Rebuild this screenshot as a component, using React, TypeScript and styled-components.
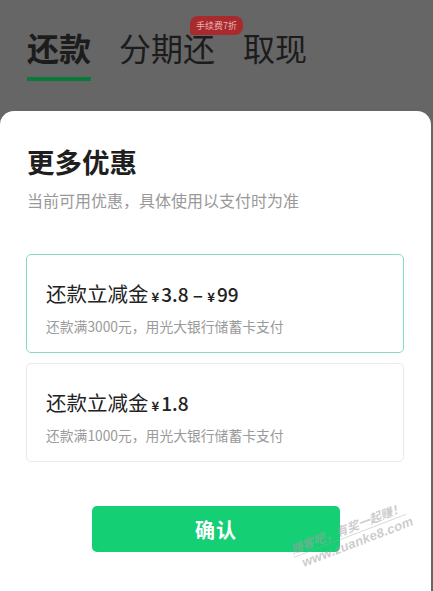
import React, { FC } from 'react';
import styled, { createGlobalStyle } from 'styled-components';

const GlobalStyle = createGlobalStyle`
  html, body {
    margin: 0;
    padding: 0;
    background: #666666;
  }
  body {
    font-family: "Noto Sans CJK SC", "Noto Sans", sans-serif;
  }
`;

const Screen = styled.div`
  position: relative;
  width: 433px;
  height: 591px;
  display: flex;
  flex-direction: column;
  background: #666666;
  overflow: hidden;
`;

const TabBar = styled.div`
  flex: 0 0 auto;
  display: flex;
  flex-direction: row;
  align-items: flex-start;
  gap: 28px;
  padding: 27px 0 0 27px;
  height: 84px;
  box-sizing: border-box;
`;

const Tab = styled.div<{ $active?: boolean }>`
  position: relative;
  display: flex;
  flex-direction: column;
  align-items: stretch;
  font-size: 32px;
  line-height: 40px;
  font-weight: ${(p) => (p.$active ? 700 : 400)};
  color: #1c1c1c;
`;

const TabLine = styled.div`
  height: 4px;
  margin-top: 10px;
  background: #0a7a3c;
`;

const Badge = styled.div`
  position: absolute;
  top: -11px;
  right: -28px;
  padding: 0 6px;
  height: 19px;
  border-radius: 8px 8px 8px 2px;
  background: #a82a2d;
  color: #e9b4b4;
  font-size: 9px;
  line-height: 19px;
  font-weight: 400;
  white-space: nowrap;
`;

const Sheet = styled.div`
  flex: 1 1 auto;
  margin-top: 27px;
  margin-right: 2px;
  background: #ffffff;
  border-radius: 14px 14px 0 0;
  display: flex;
  flex-direction: column;
  padding: 32px 27px 0 26px;
  box-sizing: border-box;
`;

const Title = styled.div`
  font-size: 27.5px;
  line-height: 36px;
  font-weight: 700;
  color: #1f1f1f;
  padding-left: 1px;
`;

const Subtitle = styled.div`
  margin-top: 10px;
  font-size: 16px;
  line-height: 22px;
  color: #999999;
  padding-left: 1px;
`;

const CardList = styled.div`
  margin-top: 43px;
  display: flex;
  flex-direction: column;
  gap: 10px;
`;

const Card = styled.div<{ $selected?: boolean }>`
  height: 99px;
  box-sizing: border-box;
  border: 1px solid ${(p) => (p.$selected ? '#86dcb6' : '#e9e9e9')};
  border-radius: 5px;
  padding: 24px 0 0 19px;
  display: flex;
  flex-direction: column;
`;

const CardTitle = styled.div`
  font-size: 20.5px;
  line-height: 28px;
  color: #222222;
`;

const Amount = styled.span`
  font-size: 19px;
  font-weight: 500;
  margin-left: 3px;
`;

const Yen = styled.span`
  font-size: 13px;
  font-weight: 700;
  margin-right: 2px;
`;

const CardSub = styled.div`
  margin-top: 6px;
  font-size: 13.8px;
  line-height: 18px;
  color: #9a9a9a;
`;

const ButtonRow = styled.div`
  margin-top: 44px;
  display: flex;
  flex-direction: row;
  justify-content: flex-start;
  padding-left: 66px;
`;

const ConfirmButton = styled.button`
  width: 248px;
  height: 46px;
  border: none;
  border-radius: 5px;
  background: #15cf74;
  color: #ffffff;
  font-family: "Noto Sans CJK SC", sans-serif;
  font-size: 20px;
  font-weight: 700;
  letter-spacing: 1px;
`;

const Watermark = styled.div`
  position: absolute;
  left: 288px;
  top: 542px;
  transform: rotate(-21deg);
  transform-origin: left top;
  display: flex;
  flex-direction: column;
  align-items: flex-start;
  color: rgba(160, 160, 160, 0.55);
  font-weight: 700;
  font-style: italic;
  pointer-events: none;
`;

const WatermarkLine = styled.div`
  font-size: 12px;
  line-height: 15px;
  border-bottom: 1px solid rgba(160, 160, 160, 0.45);
  padding-bottom: 1px;
`;

const WatermarkUrl = styled.div`
  font-family: "Liberation Sans", sans-serif;
  font-size: 13px;
  line-height: 16px;
  letter-spacing: 0.2px;
  padding-left: 6px;
`;

type Offer = {
  amount: React.ReactNode;
  condition: string;
  selected?: boolean;
};

const offers: Offer[] = [
  {
    amount: (
      <>
        <Yen>¥</Yen>3.8 – <Yen>¥</Yen>99
      </>
    ),
    condition: '还款满3000元，用光大银行储蓄卡支付',
    selected: true,
  },
  {
    amount: (
      <>
        <Yen>¥</Yen>1.8
      </>
    ),
    condition: '还款满1000元，用光大银行储蓄卡支付',
  },
];

const App: FC = () => {
  return (
    <>
      <GlobalStyle />
      <Screen>
        <TabBar>
          <Tab $active>
            还款
            <TabLine />
          </Tab>
          <Tab>
            分期还
            <Badge>手续费7折</Badge>
          </Tab>
          <Tab>取现</Tab>
        </TabBar>
        <Sheet>
          <Title>更多优惠</Title>
          <Subtitle>当前可用优惠，具体使用以支付时为准</Subtitle>
          <CardList>
            {offers.map((o, i) => (
              <Card key={i} $selected={o.selected}>
                <CardTitle>
                  还款立减金<Amount>{o.amount}</Amount>
                </CardTitle>
                <CardSub>{o.condition}</CardSub>
              </Card>
            ))}
          </CardList>
          <ButtonRow>
            <ConfirmButton>确认</ConfirmButton>
          </ButtonRow>
        </Sheet>
        <Watermark>
          <WatermarkLine>赚客吧，有奖一起赚！</WatermarkLine>
          <WatermarkUrl>www.zuanke8.com</WatermarkUrl>
        </Watermark>
      </Screen>
    </>
  );
};

export default App;
